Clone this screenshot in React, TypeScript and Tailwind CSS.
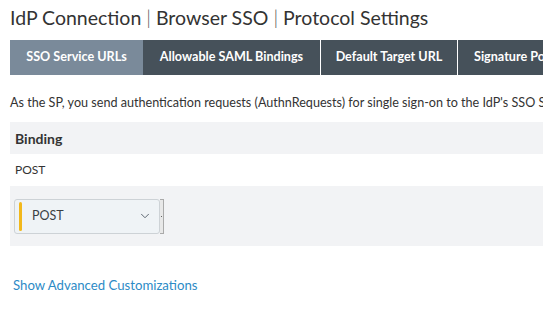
import { ChevronDown } from 'lucide-react'

const TABS = [
    { label: 'SSO Service URLs', width: 'w-[133px]', active: true },
    { label: 'Allowable SAML Bindings', width: 'w-[177px]', active: false },
    { label: 'Default Target URL', width: 'w-[137px]', active: false },
    { label: 'Signature Policy', width: 'w-[140px]', active: false },
]

export default function App() {
    return (
        <div className="w-[543px] h-[331px] overflow-hidden bg-white font-['Lato','Liberation_Sans',sans-serif] text-[#333]">
            <div className="pl-[10px] pt-[5px]">
                {/* Breadcrumb title */}
                <h1 className="text-[19.5px] leading-[26px] text-[#333] whitespace-nowrap">
                    IdP Connection <span className="text-[#555] font-light">|</span> Browser SSO{' '}
                    <span className="text-[#555] font-light">|</span> Protocol Settings
                </h1>

                {/* Tabs */}
                <div className="mt-[9px] flex h-[35px] whitespace-nowrap">
                    {TABS.map((tab, i) => (
                        <div
                            key={tab.label}
                            className={`${tab.width} shrink-0 flex items-center text-[12.6px] font-bold text-white ${
                                tab.active ? 'bg-[#7a8a9a]' : 'bg-[#46515a]'
                            } ${i > 1 ? 'border-l border-white' : ''} ${
                                i === 3 ? 'justify-start pl-[16px]' : 'justify-center'
                            }`}
                        >
                            {tab.label}
                        </div>
                    ))}
                </div>

                {/* Description */}
                <p className="mt-[20px] text-[12.6px] leading-[16px] whitespace-nowrap">
                    As the SP, you send authentication requests (AuthnRequests) for single sign-on to the IdP's SSO Service URLs.
                </p>

                {/* Table */}
                <div className="mt-[11px]">
                    <div className="h-[32px] bg-[#f2f3f5] flex items-center px-[5px] text-[14px] font-bold text-[#333]">
                        Binding
                    </div>
                    <div className="h-[32px] flex items-center px-[5px] text-[12px]">POST</div>
                    <div className="h-[60px] bg-[#f2f3f5] flex items-center px-[4px]">
                        <div className="flex items-stretch">
                            <div className="w-[146px] h-[35px] flex items-center bg-[#eff3f6] border border-[#cdd2d6] rounded-[3px] pl-[4px] pr-[7px]">
                                <span className="w-[3px] h-[29px] rounded-full bg-[#f2b81c]" />
                                <span className="ml-[10px] flex-1 text-[12.5px] text-[#3a3f44]">POST</span>
                                <ChevronDown size={14} strokeWidth={1.5} className="text-[#4a5560]" />
                            </div>
                            <div className="w-[4px] h-[35px] bg-[#e8e8e8] border border-l-0 border-[#aaa] flex items-center justify-center">
                                <span className="w-px h-px bg-[#666]" />
                            </div>
                        </div>
                    </div>
                </div>

                {/* Link */}
                <div className="mt-[30px] pl-[3px] text-[13.2px] text-[#2d8bc6]">Show Advanced Customizations</div>
            </div>
        </div>
    )
}
